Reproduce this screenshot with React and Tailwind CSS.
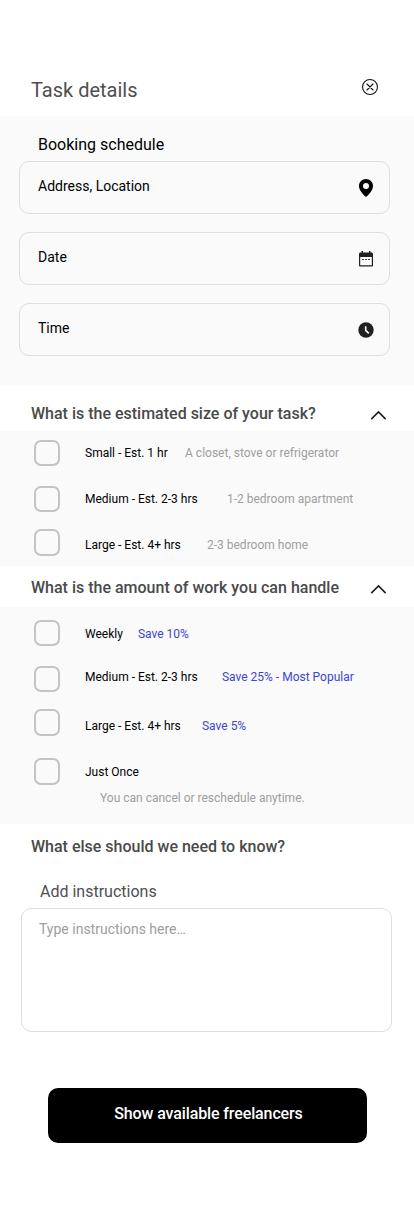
function CloseIcon() {
  return (
    <svg className="size-4" viewBox="0 0 16 16" fill="none" stroke="#111" strokeLinecap="round">
      <circle cx="8" cy="8" r="7.45" strokeWidth="1.1" />
      <path d="M5 5l6 6M11 5l-6 6" strokeWidth="1.1" />
    </svg>
  );
}

function PinIcon() {
  return (
    <svg className="h-[18px] w-[14px]" viewBox="0 0 14 18">
      <path
        fill="#000"
        fillRule="evenodd"
        d="M7 0C3.1 0 0 3.1 0 6.9c0 2.5 1.2 4.6 2.7 6.5C4.2 15.3 5.9 17.1 7 18c1.1-.9 2.8-2.7 4.3-4.6C12.8 11.5 14 9.4 14 6.9 14 3.1 10.900 0 7 0Zm0 4a3 3 0 1 1 0 6 3 3 0 0 1 0-6Z"
      />
    </svg>
  );
}

function CalendarIcon() {
  return (
    <svg className="h-[16px] w-[14px]" viewBox="0 0 14 16">
      <path
        fill="#212121"
        fillRule="evenodd"
        d="M2.5 0h1.500v1.500h6V0h1.500v1.500h1C13.300 1.500 14 2.200 14 3v11.500c0 .6-.6 1-1.200 1H1.200c-.7 0-1.200-.4-1.200-1V3c0-.8.700-1.500 1.500-1.500h1V0ZM1.200 6v8.200h11.600V6H1.200Z"
      />
      <path fill="#212121" fillOpacity=".85" d="M3 8h2v1.100H3zM6 8h2v1.100H6zM9 8h2v1.100H9z" />
    </svg>
  );
}

function ClockIcon() {
  return (
    <svg className="size-4" viewBox="0 0 16 16" fill="none">
      <circle cx="8" cy="8" r="7.7" fill="#212121" />
      <path d="M7.700 4.200v4.200l3.100 3" stroke="#fafafa" strokeWidth="1.600" />
    </svg>
  );
}

function ChevronUp() {
  return (
    <svg className="h-[10px] w-[16px]" viewBox="0 0 16 10" fill="none" stroke="#1a1a1a" strokeWidth="1.5">
      <path d="M1.300 9.100L8.500 1.900l7.200 7.200" />
    </svg>
  );
}

function Field({ label, children }) {
  return (
    <div className="flex h-[53px] items-start justify-between rounded-[10px] border border-[#dedede] pl-[18px] pr-[15px] pt-[14px]">
      <span className="text-sm text-black">{label}</span>
      <span className="mt-[3px] flex h-[18px] w-4 items-center justify-center">{children}</span>
    </div>
  );
}

function Heading({ children, className, open }) {
  return (
    <div className={`flex items-start justify-between pl-[31px] pr-[28px] ${className}`}>
      <h2 className="text-base font-medium text-[#4a4a4a]">{children}</h2>
      {open && <span className="mt-[8px]"><ChevronUp /></span>}
    </div>
  );
}

function Option({ label, note, height, box, labelTop, noteLeft, noteColor = "text-[#9e9e9e]" }) {
  return (
    <div className={`flex items-start pl-[34px] ${height}`}>
      <span className={`w-[26px] shrink-0 rounded-[7px] border-2 border-[#c4c4c4] ${box}`} />
      <span className={`ml-[25px] flex text-xs whitespace-nowrap ${labelTop}`}>
        <span className="text-black">{label}</span>
        {note && <span className={`${noteLeft} ${noteColor}`}>{note}</span>}
      </span>
    </div>
  );
}

export default function App() {
  return (
    <main className="flex h-[1226px] w-[414px] flex-col bg-white font-['Roboto',sans-serif]">
      <header className="flex h-[116px] items-start justify-between pl-[31px] pr-[36px] pt-[76px]">
        <h1 className="text-xl text-[#4f4f4f]">Task details</h1>
        <span className="mt-[3px]"><CloseIcon /></span>
      </header>

      <section className="h-[270px] bg-[#fafafa] pl-[19px] pr-[24px] pt-[17px]">
        <h2 className="pl-[19px] text-base leading-6 text-black">Booking schedule</h2>
        <div className="mt-[4px] flex flex-col gap-[18px]">
          <Field label="Address, Location"><PinIcon /></Field>
          <Field label="Date"><CalendarIcon /></Field>
          <Field label="Time"><ClockIcon /></Field>
        </div>
      </section>

      <Heading open className="h-[45px] pt-[16px]">What is the estimated size of your task?</Heading>
      <section className="h-[135px] bg-[#fafafa] pt-[9px]">
        <Option label="Small - Est. 1 hr" note="A closet, stove or refrigerator" height="h-[46px]" box="h-[26px]" labelTop="mt-[5px]" noteLeft="ml-[17.3px]" />
        <Option label="Medium - Est. 2-3 hrs" note="1-2 bedroom apartment" height="h-[43px]" box="h-[26px]" labelTop="mt-[5px]" noteLeft="ml-[29.3px]" />
        <Option label="Large - Est. 4+ hrs" note="2-3 bedroom home" height="h-[27px]" box="h-[27px]" labelTop="mt-[8px]" noteLeft="ml-[26.2px]" />
      </section>

      <Heading open className="h-[41px] pt-[10px]">What is the amount of work you can handle</Heading>
      <section className="h-[217px] bg-[#fafafa] pt-[13px]">
        <Option label="Weekly" note="Save 10%" height="h-[46px]" box="h-[26px]" labelTop="mt-[6px]" noteLeft="ml-[15px]" noteColor="text-[#3e45d1]" />
        <Option label="Medium - Est. 2-3 hrs" note="Save 25% - Most Popular" height="h-[43px]" box="h-[26px]" labelTop="mt-[3px]" noteLeft="ml-[24.3px]" noteColor="text-[#3e45d1]" />
        <Option label="Large - Est. 4+ hrs" note="Save 5%" height="h-[49px]" box="h-[27px]" labelTop="mt-[9px]" noteLeft="ml-[21.2px]" noteColor="text-[#3e45d1]" />
        <Option label="Just Once" height="h-[32px]" box="h-[27px]" labelTop="mt-[6px]" />
        <p className="pl-[100px] text-xs text-[#9e9e9e]">You can cancel or reschedule anytime.</p>
      </section>

      <Heading className="pt-[11px]">What else should we need to know?</Heading>
      <section className="pl-[21px] pr-[22px] pt-[21px]">
        <h3 className="pl-[19px] text-base text-[#4f4f4f]">Add instructions</h3>
        <div className="mt-[4px] h-[124px] rounded-[10px] border border-[#dedede] pl-[17px] pt-[10px] text-sm text-[#9e9e9e]">
          Type instructions here…
        </div>
      </section>

      <button className="ml-[48px] mt-[56px] flex h-[55px] w-[319px] shrink-0 items-start justify-center rounded-[10px] bg-black pt-[14px] pl-[2px] text-base font-medium tracking-[-0.12px] text-white">
        Show available freelancers
      </button>
    </main>
  );
}
